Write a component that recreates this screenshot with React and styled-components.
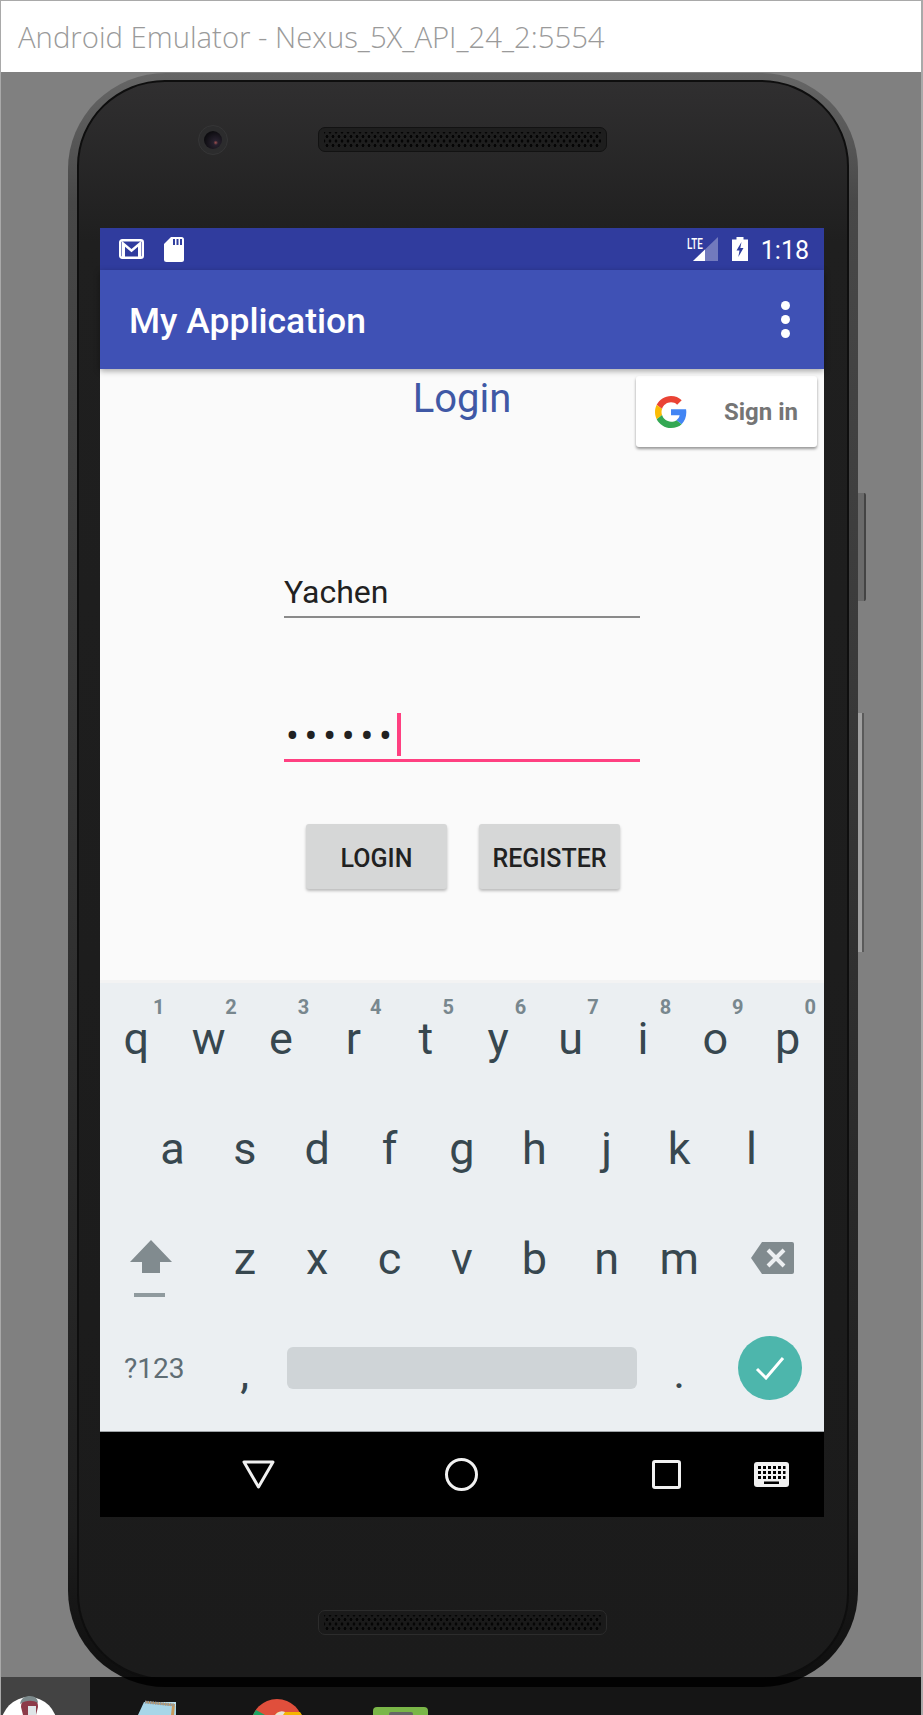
import React from "react";
import styled, { createGlobalStyle } from "styled-components";

const GlobalStyle = createGlobalStyle`
  html, body {
    margin: 0;
    padding: 0;
    background: #808080;
  }
  * {
    box-sizing: border-box;
  }
`;

const keyRows = [
  [
    ["q", "1"], ["w", "2"], ["e", "3"], ["r", "4"], ["t", "5"],
    ["y", "6"], ["u", "7"], ["i", "8"], ["o", "9"], ["p", "0"],
  ],
  [["a"], ["s"], ["d"], ["f"], ["g"], ["h"], ["j"], ["k"], ["l"]],
];
const bottomLetters = ["z", "x", "c", "v", "b", "n", "m"];

function StatusIcons() {
  return (
    <>
      <MailIcon width="25" height="20" viewBox="0 0 25 20">
        <rect x="1.200" y="1.200" width="22.600" height="17.600" rx="2" fill="none" stroke="#fff" strokeWidth="2.400" />
        <path d="M3 2l9.500 8L22 2v16h-3V7.800l-6.500 5.400L6 7.800V18H3z" fill="#fff" />
      </MailIcon>
      <SdIcon width="20" height="25" viewBox="0 0 20 25">
        <path
          d="M7 0h10.500A2.500 2.500 0 0 1 20 2.500v20a2.500 2.500 0 0 1-2.500 2.500h-15A2.500 2.500 0 0 1 0 22.500V7z"
          fill="#fff"
        />
        <path d="M9 2h2v6H9zM12.500 2h2v6h-2zM16 2h2v6h-2z" fill="#303f9f" />
      </SdIcon>
      <Spacer />
      <Signal>
        <svg width="25" height="24" viewBox="0 0 25 24">
          <path d="M25 0v24H0z" fill="#fff" fillOpacity=".32" />
          <path d="M12 12.500V24H0z" fill="#fff" />
        </svg>
        <LteLabel>LTE</LteLabel>
      </Signal>
      <svg width="16" height="24" viewBox="0 0 16 24">
        <path d="M4.500 0h7v2.500H16V24H0V2.500h4.500z" fill="#fff" />
        <path d="M9.500 5L4.500 13.500h3L6.300 20l5.200-9H8.300z" fill="#303f9f" />
      </svg>
      <Clock>1:18</Clock>
    </>
  );
}

function GoogleLogo() {
  return (
    <svg width="32" height="32" viewBox="0 0 48 48">
      <path
        fill="#EA4335"
        d="M24 9.500c3.540 0 6.710 1.220 9.210 3.600l6.850-6.850C35.900 2.380 30.470 0 24 0 14.620 0 6.510 5.380 2.560 13.220l7.980 6.190C12.430 13.720 17.740 9.500 24 9.500z"
      />
      <path
        fill="#4285F4"
        d="M46.980 24.550c0-1.570-.15-3.090-.38-4.550H24v9.020h12.940c-.58 2.960-2.260 5.480-4.780 7.180l7.730 6c4.510-4.180 7.090-10.360 7.090-17.650z"
      />
      <path
        fill="#FBBC05"
        d="M10.530 28.590c-.48-1.450-.76-2.990-.76-4.590s.27-3.140.76-4.590l-7.980-6.190C.92 16.460 0 20.120 0 24c0 3.880.92 7.540 2.560 10.780l7.970-6.190z"
      />
      <path
        fill="#34A853"
        d="M24 48c6.480 0 11.930-2.130 15.890-5.810l-7.730-6c-2.150 1.450-4.920 2.300-8.160 2.300-6.260 0-11.570-4.220-13.470-9.910l-7.980 6.190C6.510 42.620 14.620 48 24 48z"
      />
    </svg>
  );
}

function ShiftKey() {
  return (
    <ShiftGlyph>
      <svg width="42" height="33" viewBox="0 0 42 33">
        <path d="M21 0l21 22H30v11H12V22H0z" fill="#818b8f" />
      </svg>
      <ShiftLock />
    </ShiftGlyph>
  );
}

function BackspaceKey() {
  return (
    <BackspaceGlyph width="43" height="32" viewBox="0 0 43 32">
      <path d="M11 0h30a2 2 0 0 1 2 2v28a2 2 0 0 1-2 2H11L0 16z" fill="#818b8f" />
      <path d="M17 8l16 16M33 8L17 24" stroke="#eceff1" strokeWidth="4" fill="none" />
    </BackspaceGlyph>
  );
}

function Keyboard() {
  return (
    <KeyboardPanel>
      {keyRows.map((row, i) => (
        <KeyRow key={i} $inset={i === 1}>
          {row.map(([letter, digit]) => (
            <Key key={letter}>
              {letter}
              {digit && <Digit>{digit}</Digit>}
            </Key>
          ))}
        </KeyRow>
      ))}
      <KeyRow>
        <Key $span={1.5}>
          <ShiftKey />
        </Key>
        {bottomLetters.map((letter) => (
          <Key key={letter}>{letter}</Key>
        ))}
        <Key $span={1.5}>
          <BackspaceKey />
        </Key>
      </KeyRow>
      <KeyRow>
        <SymbolKey $span={1.5}>?123</SymbolKey>
        <PunctuationKey>,</PunctuationKey>
        <Key $span={5}>
          <SpaceBar />
        </Key>
        <PunctuationKey>.</PunctuationKey>
        <Key $span={1.5}>
          <EnterButton>
            <svg width="30" height="24" viewBox="0 0 30 24">
              <path d="M2 13l9 9L28 2" fill="none" stroke="#fff" strokeWidth="3" />
            </svg>
          </EnterButton>
        </Key>
      </KeyRow>
    </KeyboardPanel>
  );
}

function NavIcons() {
  return (
    <>
      <NavIcon $gap={142} width="33" height="29" viewBox="0 0 33 29">
        <path d="M2 2h29L16.500 27z" fill="none" stroke="#f1f1f1" strokeWidth="3" strokeLinejoin="round" />
      </NavIcon>
      <NavIcon $gap={170} width="33" height="33" viewBox="0 0 33 33">
        <circle cx="16.500" cy="16.500" r="15" fill="none" stroke="#f1f1f1" strokeWidth="3" />
      </NavIcon>
      <NavIcon $gap={174} width="29" height="29" viewBox="0 0 29 29">
        <rect x="1.500" y="1.500" width="26" height="26" rx="1.500" fill="none" stroke="#f1f1f1" strokeWidth="3" />
      </NavIcon>
      <NavIcon $gap={73} width="35" height="25" viewBox="0 0 35 25">
        <rect width="35" height="25" rx="3" fill="#f1f1f1" />
        <path
          d="M4 4h3v3H4zM9 4h3v3H9zM14 4h3v3h-3zM19 4h3v3h-3zM24 4h3v3h-3zM29 4h2.500v3H29zM4 9h3v3H4zM9 9h3v3H9zM14 9h3v3h-3zM19 9h3v3h-3zM24 9h3v3h-3zM29 9h2.500v3H29zM4 14h3v3H4zM9 14h3v3H9zM14 14h3v3h-3zM19 14h3v3h-3zM24 14h3v3h-3zM29 14h2.500v3H29zM10 19.500h15V22H10z"
          fill="#000"
        />
      </NavIcon>
    </>
  );
}

function TaskbarIcons() {
  return (
    <>
      <ActiveSlot>
        <svg width="60" height="38" viewBox="0 0 60 38">
          <circle cx="28" cy="48" r="28" fill="#fff" />
          <path d="M20 30c0-6 4-10 9-10s8 4 8 10l-2 8H22z" fill="#8d3b49" />
          <path d="M19 27c1-6 5-8 10-8s8 3 8 7c-5-3-12-3-18 1z" fill="#7c8a8c" />
          <path d="M27 29h8v9h-8z" fill="#dfe6e8" />
        </svg>
      </ActiveSlot>
      <TaskIcon $gap={48} width="38" height="38" viewBox="0 0 38 38">
        <path d="M8 25l33-0v14H0z" fill="#bfe3ef" />
        <path d="M6 25l32 4v9H0z" fill="#a8d6e8" />
        <path d="M7 24l30 3-1 11h-3l1-9-27-3z" fill="#c99a5b" />
        <path d="M7 25l30 3" stroke="#8f9aa0" strokeWidth="3" strokeDasharray="1.500 1" />
      </TaskIcon>
      <TaskIcon $gap={75} width="52" height="38" viewBox="0 0 52 38">
        <circle cx="26" cy="48" r="26" fill="#e04f3c" />
        <path d="M2 38a26 26 0 0 1 3-5l9 5z" fill="#1ea362" />
        <path d="M24 38a13 13 0 0 1 3-3h22l2 3z" fill="#f5b400" />
        <path d="M24 38a8 8 0 0 1 10-3l-2 3z" fill="#e8e2d6" />
      </TaskIcon>
      <TaskIcon $gap={70} width="55" height="38" viewBox="0 0 55 38">
        <path d="M4 30h47a4 4 0 0 1 4 4v4H0v-4a4 4 0 0 1 4-4z" fill="#7ab648" />
        <path d="M16 38v-1a2 2 0 0 1 2-2h20a2 2 0 0 1 2 2v1z" fill="#666" />
      </TaskIcon>
    </>
  );
}

function App() {
  return (
    <Window>
      <GlobalStyle />
      <TitleBar>Android Emulator - Nexus_5X_API_24_2:5554</TitleBar>
      <Stage>
        <Phone>
          <VolumeButton />
          <PowerButton />
          <Bezel>
            <Camera>
              <Lens />
            </Camera>
            <TopSpeaker>
              <SpeakerDots />
            </TopSpeaker>
            <Screen>
              <StatusBar>
                <StatusIcons />
              </StatusBar>
              <AppBar>
                <AppTitle>My Application</AppTitle>
                <OverflowMenu>
                  <MenuDot />
                  <MenuDot />
                  <MenuDot />
                </OverflowMenu>
              </AppBar>
              <Content>
                <Header>
                  <span />
                  <Heading>Login</Heading>
                  <GoogleButton>
                    <GoogleLogo />
                    <GoogleLabel>Sign in</GoogleLabel>
                  </GoogleButton>
                </Header>
                <Field $top={123}>Yachen</Field>
                <Field $top={94} $focused>
                  <PasswordDots>••••••</PasswordDots>
                  <Caret />
                </Field>
                <Actions>
                  <ActionButton>LOGIN</ActionButton>
                  <ActionButton>REGISTER</ActionButton>
                </Actions>
              </Content>
              <Keyboard />
              <NavBar>
                <NavIcons />
              </NavBar>
            </Screen>
            <BottomSpeaker>
              <SpeakerDots />
            </BottomSpeaker>
          </Bezel>
        </Phone>
      </Stage>
      <Taskbar>
        <TaskbarIcons />
      </Taskbar>
    </Window>
  );
}

export default App;

const Window = styled.div`
  position: relative;
  width: 923px;
  height: 1715px;
  display: flex;
  flex-direction: column;
  overflow: hidden;
  border-top: 1px solid #a9a9a9;
  border-left: 1px solid #a9a9a9;
  border-right: 2px solid #a9a9a9;
  font-family: Roboto, "Liberation Sans", sans-serif;
`;

const TitleBar = styled.div`
  flex: 0 0 71px;
  display: flex;
  align-items: center;
  padding-left: 17px;
  background: #fff;
  color: #9a9a9a;
  font-family: "Open Sans", "Liberation Sans", sans-serif;
  font-size: 29.300px;
  font-weight: 300;
  white-space: nowrap;
`;

const Stage = styled.div`
  flex: 1;
  min-height: 0;
  padding: 1px 0 0 67px;
  background: #808080;
`;

const Phone = styled.div`
  position: relative;
  width: 790px;
  height: 1614px;
  padding: 7px 9px;
  border-radius: 98px / 96px;
  background: linear-gradient(180deg, #666 0, #484848 8%, #333 50%, #1e1e1e 90%, #0e0e0e 100%);
`;

const VolumeButton = styled.div`
  position: absolute;
  top: 420px;
  right: -8px;
  width: 8px;
  height: 108px;
  background: #6a6a6a;
  border-right: 2px solid #444;
  border-radius: 0 2px 2px 0;
`;

const PowerButton = styled.div`
  position: absolute;
  top: 640px;
  right: -6px;
  width: 6px;
  height: 239px;
  background: #a0a0a0;
  border-right: 2px solid #5a5a5a;
`;

const Bezel = styled.div`
  position: relative;
  height: 100%;
  display: flex;
  flex-direction: column;
  padding: 45px 23px 0 21px;
  border: 2px solid #0e0e0e;
  border-radius: 88px / 86px;
  background: linear-gradient(180deg, #302f30 0, #1f1f1f 10%, #1b1b1b 100%);
`;

const Camera = styled.div`
  position: absolute;
  top: 43px;
  left: 119px;
  width: 30px;
  height: 30px;
  display: flex;
  align-items: center;
  justify-content: center;
  border-radius: 50%;
  background: #2c2c2d;
  border: 1px solid #363637;
`;

const Lens = styled.div`
  width: 18px;
  height: 18px;
  border-radius: 50%;
  background: radial-gradient(circle at 65% 65%, #a05050 0, #27212e 14%, #0d0c10 70%);
`;

const TopSpeaker = styled.div`
  flex: 0 0 25px;
  align-self: center;
  width: 289px;
  margin-bottom: 76px;
  padding: 4px 5px;
  border-radius: 7px;
  background: #1e1e1e;
  border: 1px solid #121212;
`;

const BottomSpeaker = styled(TopSpeaker)`
  margin: 93px 0 0;
  background: #1a1a1a;
  border-color: #2c2c2c;
`;

const SpeakerDots = styled.div`
  height: 100%;
  background:
    radial-gradient(circle, #050505 1.200px, transparent 1.700px) 0 0 / 6px 9px,
    radial-gradient(circle, #050505 1.200px, transparent 1.700px) 3px 4.500px / 6px 9px;
`;

const Screen = styled.div`
  flex: 0 0 1288px;
  display: flex;
  flex-direction: column;
`;

const StatusBar = styled.div`
  flex: 0 0 42px;
  display: flex;
  align-items: center;
  padding: 0 15px 0 19px;
  background: #303c9e;
  color: #fff;
`;

const MailIcon = styled.svg`
  margin-right: 20px;
`;

const SdIcon = styled.svg`
  display: block;
`;

const Spacer = styled.div`
  flex: 1;
`;

const Signal = styled.div`
  position: relative;
  display: flex;
  margin-right: 14px;
`;

const LteLabel = styled.span`
  position: absolute;
  top: 0;
  left: -6px;
  font-size: 15px;
  font-weight: 500;
  line-height: 15px;
  transform: scaleX(0.66);
  transform-origin: left center;
`;

const Clock = styled.span`
  margin: 3px 0 0 13px;
  font-size: 25px;
  line-height: 28px;
`;

const AppBar = styled.div`
  position: relative;
  z-index: 1;
  flex: 0 0 99px;
  display: flex;
  align-items: center;
  justify-content: space-between;
  padding: 0 34px 0 29px;
  background: #3f51b5;
  color: #fff;
  box-shadow: 0 2px 6px rgba(0, 0, 0, 0.35);
`;

const AppTitle = styled.div`
  padding-top: 2px;
  font-size: 35.500px;
  font-weight: 500;
`;

const OverflowMenu = styled.div`
  display: flex;
  flex-direction: column;
  gap: 5px;
`;

const MenuDot = styled.span`
  width: 9px;
  height: 9px;
  border-radius: 50%;
  background: #fff;
`;

const Content = styled.div`
  flex: 0 0 614px;
  display: flex;
  flex-direction: column;
  align-items: center;
  background: #fafafa;
`;

const Header = styled.div`
  align-self: stretch;
  display: grid;
  grid-template-columns: 1fr auto 1fr;
  padding: 7px 7px 0;
`;

const Heading = styled.div`
  color: #3f58a5;
  font-size: 40px;
  line-height: 46px;
`;

const GoogleButton = styled.div`
  justify-self: end;
  width: 181px;
  height: 71px;
  display: flex;
  align-items: center;
  justify-content: space-between;
  padding: 0 19px 0 19px;
  border-radius: 3px;
  background: #fff;
  box-shadow: 0 2px 3px rgba(0, 0, 0, 0.4);
`;

const GoogleLabel = styled.span`
  color: #757575;
  font-size: 24px;
  font-weight: 700;
`;

const Field = styled.div`
  width: 356px;
  height: ${(p) => (p.$focused ? "50px" : "48px")};
  margin-top: ${(p) => p.$top}px;
  display: flex;
  align-items: flex-start;
  color: #212121;
  font-size: 32px;
  line-height: 44px;
  border-bottom: ${(p) => (p.$focused ? "3.500px solid #ff4081" : "2px solid #8a8a8a")};
`;

const PasswordDots = styled.span`
  padding: 2px 0 0 2px;
  font-size: 38px;
  letter-spacing: 5.800px;
`;

const Caret = styled.span`
  width: 4px;
  height: 43px;
  margin: 1px 0 0 -1px;
  background: #ff4081;
`;

const Actions = styled.div`
  display: flex;
  gap: 32px;
  margin-top: 62px;
  padding-left: 2px;
`;

const ActionButton = styled.div`
  width: 141px;
  height: 65px;
  display: flex;
  align-items: center;
  justify-content: center;
  padding-top: 3px;
  border-radius: 3px;
  background: #d6d7d7;
  color: #212121;
  font-size: 25px;
  font-weight: 500;
  box-shadow: 0 2px 3px rgba(0, 0, 0, 0.25);
`;

const KeyboardPanel = styled.div`
  flex: 0 0 448px;
  padding-bottom: 8px;
  background: #ebeff2;
  border-bottom: 1px solid #9ea3a6;
  box-shadow: 0 -3px 0 #f3f3f3;
`;

const KeyRow = styled.div`
  height: 110px;
  display: flex;
  padding-left: ${(p) => (p.$inset ? "36.200px" : "0")};
`;

const Key = styled.div`
  position: relative;
  flex: 0 0 ${(p) => 72.4 * (p.$span || 1)}px;
  display: flex;
  align-items: center;
  justify-content: center;
  color: #37474f;
  font-size: 45px;
`;

const SymbolKey = styled(Key)`
  color: #5f6d74;
  font-size: 28px;
`;

const PunctuationKey = styled(Key)`
  padding-top: 8px;
`;

const Digit = styled.span`
  position: absolute;
  top: 12px;
  right: 8px;
  color: #78878e;
  font-size: 20px;
  font-weight: 700;
`;

const ShiftGlyph = styled.div`
  display: flex;
  flex-direction: column;
  align-items: center;
  gap: 20px;
  margin: 20px 6px 0 0;
`;

const ShiftLock = styled.div`
  width: 31px;
  height: 4px;
  margin-right: 3px;
  background: #8f9a9e;
`;

const BackspaceGlyph = styled.svg`
  margin-left: 6px;
`;

const SpaceBar = styled.div`
  width: 350px;
  height: 42px;
  border-radius: 6px;
  background: #cfd4d7;
`;

const EnterButton = styled.div`
  width: 64px;
  height: 64px;
  display: flex;
  align-items: center;
  justify-content: center;
  border-radius: 50%;
  background: #4db6ac;
`;

const NavBar = styled.div`
  flex: 0 0 85px;
  display: flex;
  align-items: center;
  background: #000;
`;

const NavIcon = styled.svg`
  flex: none;
  margin-left: ${(p) => p.$gap}px;
`;

const Taskbar = styled.div`
  position: absolute;
  left: 0;
  right: 0;
  bottom: 0;
  height: 38px;
  display: flex;
  background: rgba(0, 0, 0, 0.84);
`;

const ActiveSlot = styled.div`
  flex: 0 0 89px;
  background: rgba(255, 255, 255, 0.2);
`;

const TaskIcon = styled.svg`
  flex: none;
  margin-left: ${(p) => p.$gap}px;
`;
